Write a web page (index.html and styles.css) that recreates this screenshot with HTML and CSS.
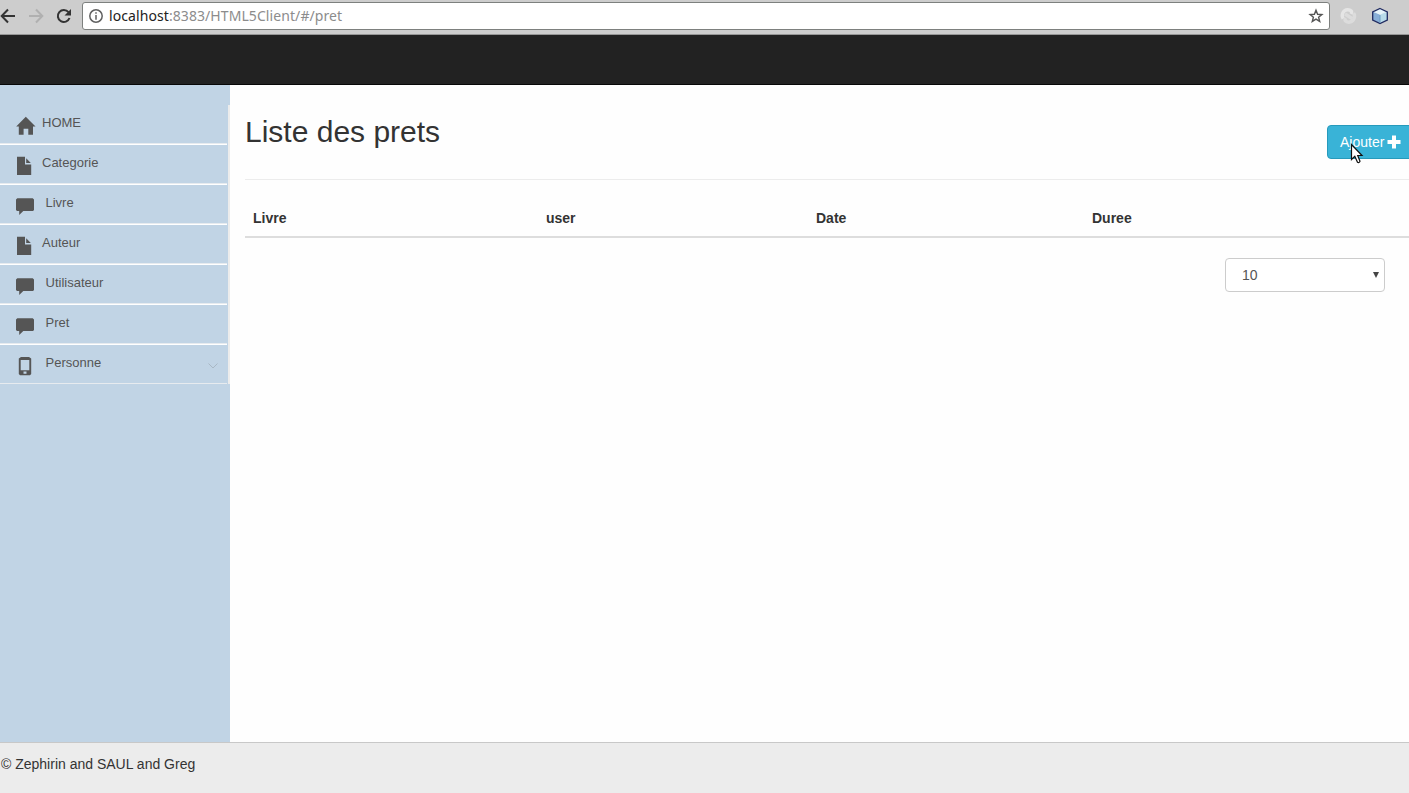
FILE: index.html
```html
<!DOCTYPE html>
<html lang="fr">
<head>
<meta charset="utf-8">
<title>Liste des prets</title>
<link rel="stylesheet" href="styles.css">
</head>
<body>
<svg class="symbols" aria-hidden="true">
  <symbol id="home" viewBox="0 0 20 20"><path d="M9.8 .8 19.5 10.6H17V18.8H12.3V12.7H7.6V18.8H2.8V10.6H.2Z"/></symbol>
  <symbol id="file" viewBox="0 0 20 20"><path d="M1 .8H9V8.5H15.2V19H1ZM10.2 2.3 14.8 7H10.2Z"/></symbol>
  <symbol id="comment" viewBox="0 0 20 20"><path d="M1.3 2.3H16.7L18 3.5V14L17 15H7.3L3.2 19V15H1L0 14V3.5Z"/></symbol>
  <symbol id="phone" viewBox="0 0 20 20"><path fill-rule="evenodd" d="M5 1H13L15.2 2.5V18L14 19.2H4L2.8 18V2.5ZM4.7 4V14.3H13.3V4ZM7.5 15.5V17.8H10.5V15.5Z"/></symbol>
</svg>
<header class="toolbar">
  <svg class="controls" width="76" height="32" viewBox="0 0 76 32">
    <path class="back" d="M15 16H2M8 9.5 1.7 16 8 22.5"/>
    <path class="forward" d="M29 16H42M36 9.5 42.3 16 36 22.5"/>
    <path class="reload" d="M69.5 18A6 6 0 1 1 68.5 12.2"/><path class="reload-tip" d="M71 9V15.5H64.5Z"/>
  </svg>
  <div class="address">
    <svg class="info" width="16" height="16" viewBox="0 0 16 16"><circle cx="8" cy="8" r="6.2"/><path d="M8 7V11.8M8 4.2V5.8"/></svg>
    <span class="url"><b>localhost</b>:8383/HTML5Client/#/pret</span>
    <svg class="star" width="16" height="16" viewBox="0 0 16 16"><path d="M8 2.2 9.6 6.3 13.9 6.6 10.6 9.3 11.7 13.4 8 11.1 4.3 13.4 5.4 9.3 2.1 6.6 6.4 6.3Z"/></svg>
  </div>
  <svg class="extensions" width="72" height="32" viewBox="0 0 72 32">
    <g fill="none" stroke-width="3.4"><path stroke="#e5e5e5" d="M6.2 18.6C4 15 6 10 10.5 9.8 14 9.7 15.5 11.5 14 14"/><path stroke="#dcdcdc" d="M16.6 13.2C19 17 16.5 22 12 22.2 8.5 22.3 7 20.5 8.8 18M8 14 15 18.5"/></g>
    <path fill="#88afd8" d="M35.5 11.5 43 14.5V23L35.5 20Z"/><path fill="#b9dcea" d="M50.5 11.5 43 14.5V23L50.5 20Z"/><path fill="#e6f4fa" d="M43 8.5 50.5 11.5 43 14.7 35.5 11.5Z"/>
    <path fill="none" stroke="#202b61" stroke-width="1.3" d="M43 8.5 50.3 11.8V20L43 23.6 35.7 20V11.8Z"/><path stroke="#6f9cc0" d="M43 15V23"/>
  </svg>
</header>
<nav class="navbar"></nav>
<div class="body">
  <aside class="sidebar">
    <ul class="menu">
      <li><svg class="icon"><use href="#home"/></svg><span>HOME</span></li>
      <li><svg class="icon"><use href="#file"/></svg><span>Categorie</span></li>
      <li class="wide"><svg class="icon"><use href="#comment"/></svg><span>Livre</span></li>
      <li><svg class="icon"><use href="#file"/></svg><span>Auteur</span></li>
      <li class="wide"><svg class="icon"><use href="#comment"/></svg><span>Utilisateur</span></li>
      <li class="wide"><svg class="icon"><use href="#comment"/></svg><span>Pret</span></li>
      <li class="wide"><svg class="icon"><use href="#phone"/></svg><span>Personne</span><svg class="chevron" width="10" height="6" viewBox="0 0 10 6"><path d="M.5.5 5 5 9.5.5"/></svg></li>
    </ul>
  </aside>
  <main class="content">
    <div class="heading">
      <h1>Liste des prets</h1>
      <button class="add">Ajouter <svg width="14" height="14" viewBox="0 0 14 14"><path d="M5 .5H9V5H13.5V9H9V13.5H5V9H.5V5H5Z"/></svg></button>
    </div>
    <table class="loans"><thead><tr><th class="book">Livre</th><th class="user">user</th><th class="date">Date</th><th>Duree</th></tr></thead></table>
    <div class="page-size"><span>10</span><svg width="6" height="6" viewBox="0 0 6 6"><path d="M0 0H6L3 6Z"/></svg></div>
  </main>
</div>
<footer class="footer">© Zephirin and SAUL and Greg</footer>
<svg class="cursor" width="14" height="22" viewBox="0 0 14 22"><path d="M1.5 1.5V16.5L4.8 13.3 7.5 19.3Q9 20.3 10 18.3L7.7 12.5H12Z"/></svg>
</body>
</html>
```
FILE: styles.css
```css
* { box-sizing: border-box; }
body { margin: 0; height: 793px; display: flex; flex-direction: column; overflow: hidden; background: #fefefe; color: #333; font: 14px/20px "Liberation Sans", Arial, sans-serif; }
.symbols { display: none; }
svg { flex: none; }
.toolbar { height: 35px; flex: none; display: flex; background: #cdcdcd; border-bottom: 1px solid #969696; }
.controls { fill: none; stroke: #333; stroke-width: 2; }
.controls .forward { stroke: #b0b0b0; }
.controls .reload-tip { fill: #333; stroke: none; }
.address { width: 1248px; height: 28px; margin: 2px 0 0 6px; padding: 0 5px; display: flex; align-items: center; background: #fff; border: 1px solid #7d807e; border-radius: 3px; }
.info { fill: none; stroke: #606060; stroke-width: 1.5; }
.url { flex: 1; margin-left: 5px; font: 14px/20px "Noto Sans", sans-serif; letter-spacing: .08px; color: #8c8c8c; }
.url b { font-weight: normal; color: #222; }
.star { fill: none; stroke: #555; stroke-width: 1.4; }
.extensions { margin-left: 7px; }
.navbar { height: 50px; flex: none; background: #222; border-bottom: 1px solid #080808; }
.body { flex: 1; display: flex; min-height: 0; }
.sidebar { width: 230px; flex: none; padding-top: 20px; background: #c1d4e5; }
.menu { list-style: none; margin: 0; padding: 0; border-right: 2px solid #ececec; }
.menu li { height: 40px; display: flex; padding-left: 16px; margin-right: 1px; border-top: 1px solid #fff; border-bottom: 1px solid #e7ebef; color: #555; font-size: 13px; line-height: 18px; }
.menu li:first-child { height: 39px; border-top: 0; }
.menu span { margin: 9px 0 0 6px; }
.menu .wide span { margin-left: 9.5px; }
.icon { width: 20px; height: 20px; margin-top: 11px; fill: #555; }
.chevron { margin: 18px 9px 0 auto; fill: none; stroke: #a9b8c5; }
.content { flex: 1; min-width: 0; padding-left: 15px; }
.heading { height: 95px; padding-top: 30px; display: flex; justify-content: space-between; border-bottom: 1px solid #ececec; }
h1 { margin: 0; font-size: 30px; line-height: 33px; font-weight: 500; }
.add { width: 95px; height: 34px; margin: 10px -13px 0 0; padding: 0 12px; display: flex; align-items: center; gap: 3px; color: #fff; background: #39b3d7; border: 1px solid #269abc; border-radius: 4px; font: 14px/20px "Liberation Sans", Arial, sans-serif; }
.add svg { fill: #fff; }
.loans { width: 100%; height: 38px; margin-top: 20px; border-collapse: separate; border-spacing: 0; table-layout: fixed; }
.loans th { padding: 0 8px; height: 38px; text-align: left; border-bottom: 2px solid #ddd; }
.book { width: 293px; }
.user { width: 270px; }
.date { width: 276px; }
.page-size { width: 160px; height: 34px; margin: 20px 24px 0 auto; padding: 0 5px 0 16px; display: flex; align-items: center; justify-content: space-between; background: #fff; border: 1px solid #ccc; border-radius: 4px; color: #555; }
.page-size svg { fill: #444; }
.footer { height: 51px; flex: none; padding: 11px 1px; background: #ececec; border-top: 1px solid #c8c8c8; }
.cursor { position: absolute; left: 1350px; top: 143px; fill: #fff; stroke: #111; stroke-width: 1.2; }
```
